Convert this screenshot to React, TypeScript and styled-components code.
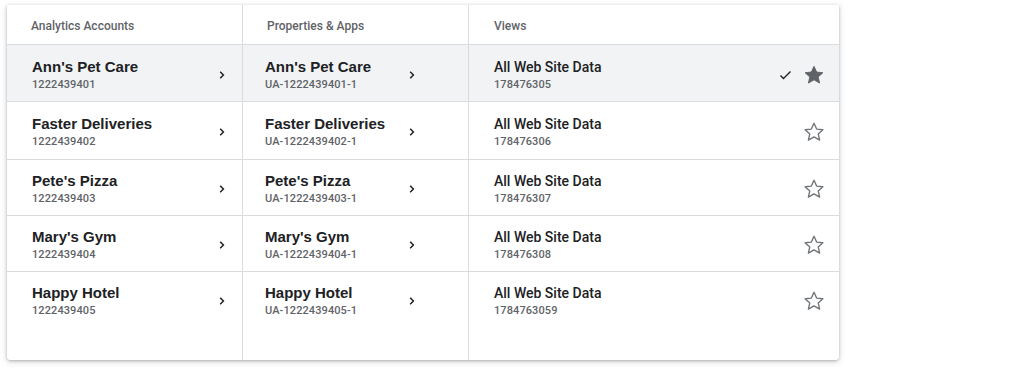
import React from "react";
import styled, { createGlobalStyle } from "styled-components";

const GlobalStyle = createGlobalStyle`
  body {
    margin: 0;
    background: #ffffff;
    font-family: Roboto, "Liberation Sans", Arial, sans-serif;
  }
`;

const Page = styled.div`
  width: 1023px;
  height: 381px;
  padding: 5px 0 0 7px;
  box-sizing: border-box;
`;

const Panel = styled.div`
  width: 832px;
  height: 355px;
  background: #fff;
  border-radius: 0 0 4px 4px;
  box-shadow: 0 1px 3px rgba(60, 64, 67, 0.35), 0 2px 6px 1px rgba(60, 64, 67, 0.12);
  display: flex;
  flex-direction: column;
  overflow: hidden;
`;

const Row = styled.div<{ h?: number; selected?: boolean; last?: boolean }>`
  display: grid;
  grid-template-columns: 236px 226px 1fr;
  height: ${(p) => (p.h ? `${p.h}px` : "auto")};
  flex: ${(p) => (p.last ? 1 : "none")};
  background: ${(p) => (p.selected ? "#f1f3f4" : "#fff")};
  border-bottom: ${(p) => (p.last ? "none" : "1px solid #dadce0")};
  box-sizing: border-box;
`;

const HeadCell = styled.div<{ pad: number }>`
  display: flex;
  align-items: center;
  padding-left: ${(p) => p.pad}px;
  padding-top: 2px;
  font-size: 12px;
  font-weight: 500;
  color: #5f6368;
  border-right: 1px solid #dadce0;
  &:last-child {
    border-right: none;
  }
`;

const Cell = styled.div<{ pad: number; right: number; top?: boolean }>`
  display: flex;
  flex-direction: column;
  justify-content: ${(p) => (p.top ? "flex-start" : "center")};
  padding: ${(p) => (p.top ? "12px" : "3px")} ${(p) => p.right}px 0 ${(p) => p.pad}px;
  border-right: 1px solid #dadce0;
  box-sizing: border-box;
  &:last-child {
    border-right: none;
  }
`;

const Line = styled.div`
  display: flex;
  align-items: center;
`;

const Info = styled.div`
  flex: 1;
  display: flex;
  flex-direction: column;
  gap: 2px;
`;

const Name = styled.div<{ roboto?: boolean }>`
  font-family: ${(p) => (p.roboto ? "Roboto, sans-serif" : `"Liberation Sans", Arial, sans-serif`)};
  font-weight: ${(p) => (p.roboto ? 500 : 700)};
  font-size: ${(p) => (p.roboto ? "14px" : "15px")};
  color: #202124;
  line-height: 18px;
`;

const Sub = styled.div`
  font-family: Roboto, sans-serif;
  font-size: 11px;
  font-weight: 500;
  color: #5f6368;
  line-height: 14px;
  letter-spacing: 0.1px;
`;

const Actions = styled.div`
  display: flex;
  align-items: center;
  gap: 10px;
`;

const Chevron = () => (
  <svg width="8" height="10" viewBox="0 0 8 10">
    <path d="M2.2 1.8 L5.4 5 L2.2 8.2" fill="none" stroke="#202124" strokeWidth="1.5" />
  </svg>
);

const Check = () => (
  <svg width="14" height="12" viewBox="0 0 14 12">
    <path d="M1.5 6.5 L4.5 9.5 L11.5 2.5" fill="none" stroke="#202124" strokeWidth="1.4" />
  </svg>
);

const STAR = "M12 2.5l2.9 6.3 6.8.7-5.1 4.6 1.5 6.7L12 17.3l-6.1 3.5 1.5-6.7-5.1-4.6 6.8-.7z";

const Star = ({ filled }: { filled?: boolean }) => (
  <svg width="22" height="22" viewBox="0 0 24 24">
    <path
      d={STAR}
      fill={filled ? "#5f6368" : "none"}
      stroke={filled ? "#5f6368" : "#70757a"}
      strokeWidth={filled ? 1 : 1.5}
      strokeLinejoin="round"
    />
  </svg>
);

const accounts = [
  { name: "Ann's Pet Care", id: "1222439401", view: "178476305", h: 57 },
  { name: "Faster Deliveries", id: "1222439402", view: "178476306", h: 58 },
  { name: "Pete's Pizza", id: "1222439403", view: "178476307", h: 56 },
  { name: "Mary's Gym", id: "1222439404", view: "178476308", h: 56 },
  { name: "Happy Hotel", id: "1222439405", view: "1784763059", h: 0 },
];

const App = () => {
  return (
    <Page>
      <GlobalStyle />
      <Panel>
        <Row h={40}>
          <HeadCell pad={24}>Analytics Accounts</HeadCell>
          <HeadCell pad={24}>Properties &amp; Apps</HeadCell>
          <HeadCell pad={25}>Views</HeadCell>
        </Row>
        {accounts.map((a, i) => {
          const last = i === accounts.length - 1;
          const selected = i === 0;
          return (
            <Row key={a.id} h={a.h || undefined} selected={selected} last={last}>
              <Cell pad={25} right={16} top={last}>
                <Line>
                  <Info>
                    <Name>{a.name}</Name>
                    <Sub>{a.id}</Sub>
                  </Info>
                  <Chevron />
                </Line>
              </Cell>
              <Cell pad={22} right={52} top={last}>
                <Line>
                  <Info>
                    <Name>{a.name}</Name>
                    <Sub>UA-{a.id}-1</Sub>
                  </Info>
                  <Chevron />
                </Line>
              </Cell>
              <Cell pad={25} right={14} top={last}>
                <Line>
                  <Info>
                    <Name roboto>All Web Site Data</Name>
                    <Sub>{a.view}</Sub>
                  </Info>
                  <Actions>
                    {selected && <Check />}
                    <Star filled={selected} />
                  </Actions>
                </Line>
              </Cell>
            </Row>
          );
        })}
      </Panel>
    </Page>
  );
};

export default App;
